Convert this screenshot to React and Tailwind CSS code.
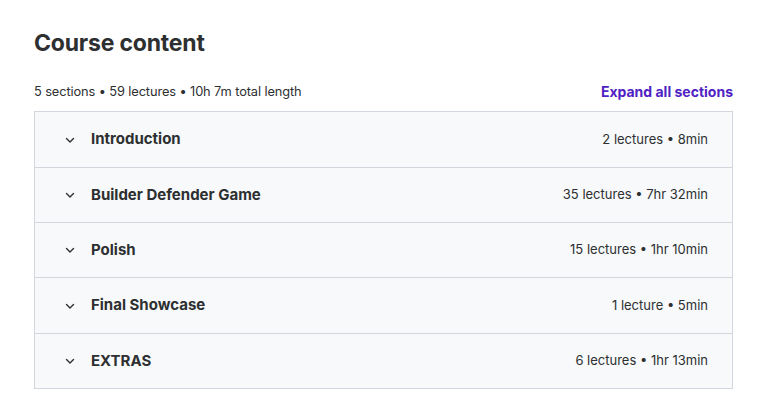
const sections = [
  { title: "Introduction", meta: "2 lectures • 8min", h: "h-[55px]" },
  { title: "Builder Defender Game", meta: "35 lectures • 7hr 32min", h: "h-[55px]" },
  { title: "Polish", meta: "15 lectures • 1hr 10min", h: "h-[55px]" },
  { title: "Final Showcase", meta: "1 lecture • 5min", h: "h-[56px]" },
  { title: "EXTRAS", meta: "6 lectures • 1hr 13min", h: "h-[55px]" },
];

const Chevron = () => (
  <svg width="12" height="12" viewBox="0 0 12 12" fill="none" className="shrink-0">
    <path d="M2.5 4.5 6 8l3.5-3.5" stroke="#2d2f31" strokeWidth="1.4" strokeLinecap="round" strokeLinejoin="round" />
  </svg>
);

export default function App() {
  return (
    <div className="w-[760px] h-[406px] bg-white text-[#2d2f31] font-['Inter',sans-serif]">
      <div className="pl-[34px] pr-[27px] pt-[28px]">
        <h2 className="text-[23px] leading-[30px] font-bold tracking-[-0.2px]">Course content</h2>

        <div className="flex items-end justify-between mt-[26px] mb-[11px]">
          <span className="text-[12.8px] leading-[16px] tracking-[-0.1px]">5 sections • 59 lectures • 10h 7m total length</span>
          <button className="text-[14px] leading-[16px] font-bold text-[#5022c3]">Expand all sections</button>
        </div>

        <div className="border border-[#d1d7dc] bg-[#f7f9fa]">
          {sections.map((s, i) => (
            <div
              key={i}
              className={`flex items-center ${s.h} pl-[29px] pr-[24px] ${i > 0 ? "border-t border-[#d1d7dc]" : ""}`}
            >
              <Chevron />
              <span className="ml-[15px] text-[15px] font-bold">{s.title}</span>
              <span className="ml-auto text-[13px]">{s.meta}</span>
            </div>
          ))}
        </div>
      </div>
    </div>
  );
}
